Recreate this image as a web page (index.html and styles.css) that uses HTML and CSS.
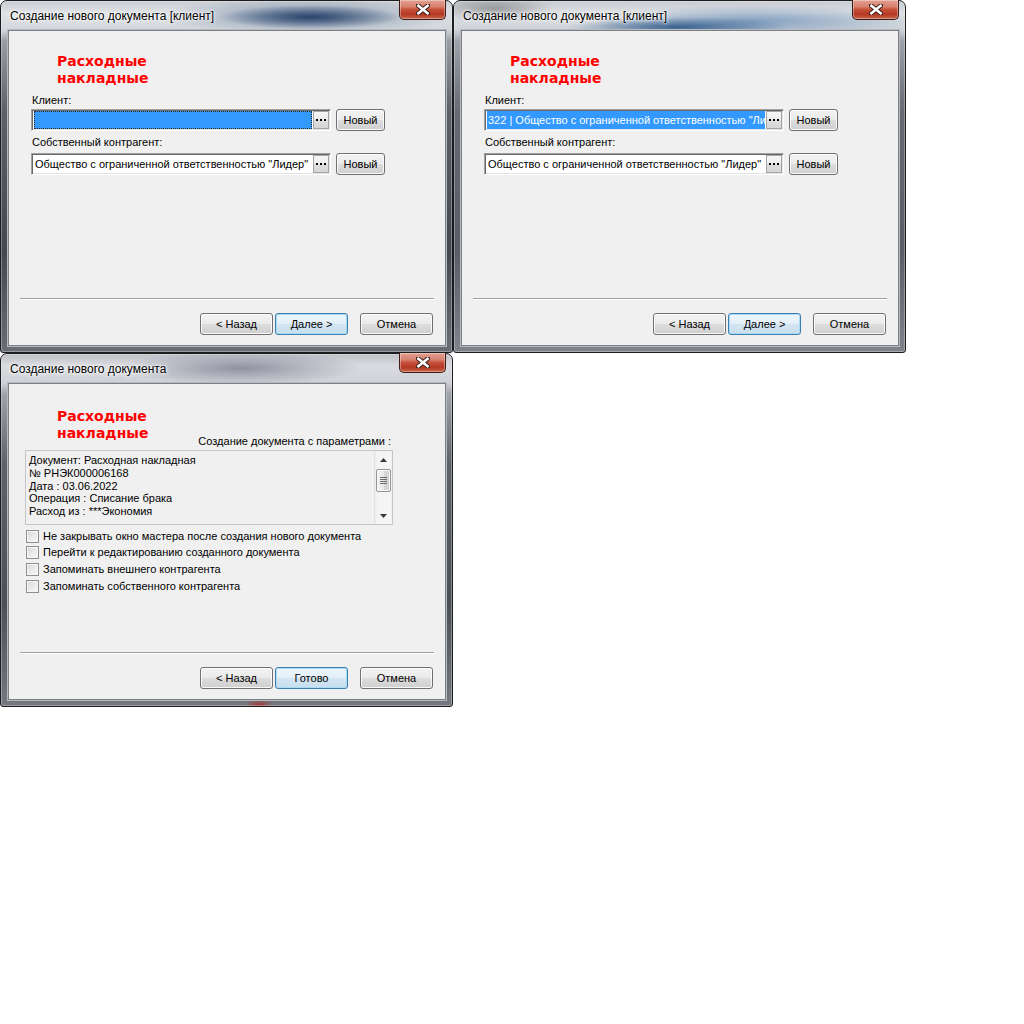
FILE: index.html
```html
<!DOCTYPE html>
<html lang="ru">
<head>
<meta charset="utf-8">
<title>Создание нового документа</title>
<link rel="stylesheet" href="styles.css">
</head>
<body>
<div class="screen">

  <!-- Window 1 -->
  <div class="win win-a">
    <div class="titlebar">
      <span class="title">Создание нового документа [клиент]</span>
      <span class="close"><svg width="14" height="11" viewBox="0 0 14 11"><path d="M2 1.5 L12 9.5 M12 1.5 L2 9.5" stroke="#3b1d17" stroke-width="4.6" stroke-linecap="square"/><path d="M2.4 1.8 L11.6 9.2 M11.6 1.8 L2.4 9.2" stroke="#fff" stroke-width="2.6" stroke-linecap="square"/></svg></span>
    </div>
    <div class="client">
      <div class="heading">Расходные<br>накладные</div>
      <div class="label">Клиент:</div>
      <div class="field-row">
        <div class="combo">
          <div class="combo-text selected focus"></div>
          <span class="ellipsis"><svg width="10" height="3" viewBox="0 0 10 3"><rect x="0" y="0" width="2" height="2" fill="#000"/><rect x="4" y="0" width="2" height="2" fill="#000"/><rect x="8" y="0" width="2" height="2" fill="#000"/></svg></span>
        </div>
        <button class="btn btn-new">Новый</button>
      </div>
      <div class="label label-2">Собственный контрагент:</div>
      <div class="field-row">
        <div class="combo">
          <div class="combo-text">Общество с ограниченной ответственностью "Лидер"</div>
          <span class="ellipsis"><svg width="10" height="3" viewBox="0 0 10 3"><rect x="0" y="0" width="2" height="2" fill="#000"/><rect x="4" y="0" width="2" height="2" fill="#000"/><rect x="8" y="0" width="2" height="2" fill="#000"/></svg></span>
        </div>
        <button class="btn btn-new">Новый</button>
      </div>
      <div class="footer">
        <div class="sep"></div>
        <div class="buttons">
          <button class="btn">&lt; Назад</button>
          <button class="btn btn-default">Далее &gt;</button>
          <button class="btn btn-cancel">Отмена</button>
        </div>
      </div>
    </div>
  </div>

  <!-- Window 2 -->
  <div class="win win-b">
    <div class="titlebar">
      <span class="title">Создание нового документа [клиент]</span>
      <span class="close"><svg width="14" height="11" viewBox="0 0 14 11"><path d="M2 1.5 L12 9.5 M12 1.5 L2 9.5" stroke="#3b1d17" stroke-width="4.6" stroke-linecap="square"/><path d="M2.4 1.8 L11.6 9.2 M11.6 1.8 L2.4 9.2" stroke="#fff" stroke-width="2.6" stroke-linecap="square"/></svg></span>
    </div>
    <div class="client">
      <div class="heading">Расходные<br>накладные</div>
      <div class="label">Клиент:</div>
      <div class="field-row">
        <div class="combo">
          <div class="combo-text selected">322 | Общество с ограниченной ответственностью "Ли</div>
          <span class="ellipsis"><svg width="10" height="3" viewBox="0 0 10 3"><rect x="0" y="0" width="2" height="2" fill="#000"/><rect x="4" y="0" width="2" height="2" fill="#000"/><rect x="8" y="0" width="2" height="2" fill="#000"/></svg></span>
        </div>
        <button class="btn btn-new">Новый</button>
      </div>
      <div class="label label-2">Собственный контрагент:</div>
      <div class="field-row">
        <div class="combo">
          <div class="combo-text">Общество с ограниченной ответственностью "Лидер"</div>
          <span class="ellipsis"><svg width="10" height="3" viewBox="0 0 10 3"><rect x="0" y="0" width="2" height="2" fill="#000"/><rect x="4" y="0" width="2" height="2" fill="#000"/><rect x="8" y="0" width="2" height="2" fill="#000"/></svg></span>
        </div>
        <button class="btn btn-new">Новый</button>
      </div>
      <div class="footer">
        <div class="sep"></div>
        <div class="buttons">
          <button class="btn">&lt; Назад</button>
          <button class="btn btn-default">Далее &gt;</button>
          <button class="btn btn-cancel">Отмена</button>
        </div>
      </div>
    </div>
  </div>

  <!-- Window 3 -->
  <div class="win win-c">
    <div class="titlebar">
      <span class="title">Создание нового документа</span>
      <span class="close"><svg width="14" height="11" viewBox="0 0 14 11"><path d="M2 1.5 L12 9.5 M12 1.5 L2 9.5" stroke="#3b1d17" stroke-width="4.6" stroke-linecap="square"/><path d="M2.4 1.8 L11.6 9.2 M11.6 1.8 L2.4 9.2" stroke="#fff" stroke-width="2.6" stroke-linecap="square"/></svg></span>
    </div>
    <div class="client client-c">
      <div class="head-row">
        <div class="heading heading-c">Расходные<br>накладные</div>
        <div class="params-label">Создание документа с параметрами :</div>
      </div>
      <div class="listbox">
        <div class="list-lines">
          <div>Документ: Расходная накладная</div>
          <div>№ РНЭК000006168</div>
          <div>Дата : 03.06.2022</div>
          <div>Операция : Списание брака</div>
          <div>Расход из : ***Экономия</div>
        </div>
        <div class="vscroll">
          <span class="arrow-up"><svg width="7" height="4" viewBox="0 0 7 4"><path d="M0 4 L3.5 0 L7 4 Z" fill="#3a3a3a"/></svg></span>
          <span class="thumb"><svg width="7" height="7" viewBox="0 0 7 7"><path d="M0 0.5 H7 M0 2.5 H7 M0 4.5 H7 M0 6.5 H7" stroke="#6d6d6d" stroke-width="1"/></svg></span>
          <span class="arrow-down"><svg width="7" height="4" viewBox="0 0 7 4"><path d="M0 0 L7 0 L3.5 4 Z" fill="#3a3a3a"/></svg></span>
        </div>
      </div>
      <div class="checks">
        <label class="check"><span class="box"></span>Не закрывать окно мастера после создания нового документа</label>
        <label class="check"><span class="box"></span>Перейти к редактированию созданного документа</label>
        <label class="check"><span class="box"></span>Запоминать внешнего контрагента</label>
        <label class="check"><span class="box"></span>Запоминать собственного контрагента</label>
      </div>
      <div class="footer">
        <div class="sep"></div>
        <div class="buttons">
          <button class="btn">&lt; Назад</button>
          <button class="btn btn-default">Готово</button>
          <button class="btn btn-cancel">Отмена</button>
        </div>
      </div>
    </div>
  </div>

</div>
</body>
</html>
```
FILE: styles.css
```css
* { box-sizing: border-box; }

html, body {
  margin: 0;
  padding: 0;
  background: #ffffff;
}

body {
  width: 1024px;
  height: 1024px;
  font-family: "Liberation Sans", Arial, sans-serif;
  font-size: 11px;
  color: #000;
}

.screen {
  display: grid;
  grid-template-columns: 453px 453px;
  grid-template-rows: 353px 354px;
}

/* ---------- window frame ---------- */
.win {
  display: flex;
  flex-direction: column;
  border: 1px solid #1b1c1e;
  border-radius: 7px 7px 3px 3px;
  padding: 0 6px 6px 7px;
  box-shadow: inset 0 0 0 1px rgba(255,255,255,0.3);
}

.win-a {
  background:
    radial-gradient(ellipse 90px 12px at 310px 16px, rgba(38,64,104,0.95), rgba(38,64,104,0) 100%),
    radial-gradient(ellipse 150px 18px at 305px 15px, rgba(90,115,150,0.7), rgba(90,115,150,0) 100%),
    linear-gradient(to bottom, #c9cdd2 0, #dfe2e6 12px, #d2d6da 29px, #9a9ea3 40px, #5d6167 110px, #45494f 250px, #6a6e74 100%);
}

.win-b {
  background:
    radial-gradient(ellipse 110px 10px at 225px 26px, rgba(50,92,140,0.95), rgba(50,92,140,0) 100%),
    radial-gradient(ellipse 160px 16px at 300px 20px, rgba(110,145,185,0.8), rgba(110,145,185,0) 100%),
    radial-gradient(ellipse 60px 14px at 40px 8px, rgba(110,110,110,0.6), rgba(110,110,110,0) 100%),
    linear-gradient(to bottom, #c7cbd0 0, #dde0e4 12px, #cdd2d8 29px, #9da3a9 40px, #676b71 110px, #5a5e64 250px, #80848a 100%);
}

.win-c {
  background:
    radial-gradient(ellipse 120px 17px at 240px 14px, rgba(135,137,155,0.9), rgba(135,137,155,0) 100%),
    radial-gradient(ellipse 14px 6px at 258px 351px, rgba(170,40,40,0.8), rgba(170,40,40,0) 100%),
    linear-gradient(to bottom, #bfc1c7 0, #d9dbe0 12px, #cfd1d6 29px, #9fa2a7 40px, #5f6369 110px, #4c5056 250px, #75797f 100%);
}

.titlebar {
  height: 29px;
  display: flex;
  justify-content: space-between;
  align-items: flex-start;
  padding-left: 2px;
}

.title {
  margin-top: 8px;
  font-family: "Liberation Sans", Arial, sans-serif;
  font-size: 12px;
  line-height: 15px;
  color: #000;
  text-shadow: 0 0 6px #fff, 0 0 3px #fff, 0 0 2px rgba(255,255,255,0.9);
}

.close {
  width: 47px;
  height: 20px;
  margin-top: -1px;
  border: 1px solid #3d1a14;
  border-top: none;
  border-radius: 0 0 5px 5px;
  background: linear-gradient(to bottom, #e3a191 0%, #d7806e 35%, #c6513b 50%, #b33823 75%, #c9654a 100%);
  box-shadow: inset 0 0 0 1px rgba(255,255,255,0.35);
  display: flex;
  align-items: center;
  justify-content: center;
}

/* ---------- client area ---------- */
.client {
  flex: 1;
  display: flex;
  flex-direction: column;
  background: #f0f0f0;
  border: 1px solid #7b8087;
  box-shadow: 0 0 0 1px #b6b9bd;
  padding: 22px 0 10px 0;
}

.heading {
  margin-left: 48px;
  font-family: "DejaVu Sans", Verdana, sans-serif;
  font-weight: bold;
  font-size: 14px;
  line-height: 17px;
  color: #ff0000;
}

.label {
  margin: 7px 0 0 23px;
  line-height: 13px;
}

.label-2 { margin-top: 5px; }

.field-row {
  display: flex;
  align-items: center;
  margin: 2px 0 0 22px;
}

.label-2 + .field-row { margin-top: 4px; }

.combo {
  width: 300px;
  height: 22px;
  display: flex;
  align-items: center;
  border: 1px solid;
  border-color: #a0a0a0 #ffffff #ffffff #a0a0a0;
  box-shadow: inset 1px 1px 0 #696969, inset -1px -1px 0 #e3e3e3;
  background: #ffffff;
  padding: 2px 1px 2px 2px;
}

.combo-text {
  flex: 1;
  height: 18px;
  line-height: 18px;
  padding-left: 1px;
  white-space: nowrap;
  overflow: hidden;
}

.selected {
  background: #3399ff;
  color: #ffffff;
}

.focus {
  outline: 1px dotted #2a2a2a;
  outline-offset: -1px;
}

.ellipsis {
  width: 16px;
  height: 18px;
  margin-left: 1px;
  display: flex;
  align-items: center;
  justify-content: center;
  border: 1px solid #a5a5a5;
  background: linear-gradient(to bottom, #f6f6f6 0%, #ececec 50%, #dfdfdf 51%, #d6d6d6 100%);
}

/* ---------- buttons ---------- */
.btn {
  height: 22px;
  width: 73px;
  padding: 0;
  font-family: "Liberation Sans", Arial, sans-serif;
  font-size: 11px;
  color: #000;
  border: 1px solid #707070;
  border-radius: 3px;
  background: linear-gradient(to bottom, #f2f2f2 0%, #ebebeb 48%, #dddddd 50%, #cfcfcf 100%);
  box-shadow: inset 0 0 0 1px rgba(255,255,255,0.85);
}

.btn-new {
  width: 49px;
  margin-left: 5px;
}

.btn-default {
  border-color: #3c7fb1;
  background: linear-gradient(to bottom, #eef6fc 0%, #e3eff8 48%, #d3e5f2 50%, #c9dfee 100%);
  box-shadow: inset 0 0 0 1px #a9dbf6;
}

.footer {
  margin-top: auto;
}

.sep {
  height: 2px;
  margin: 0 11px;
  border-top: 1px solid #a0a0a0;
  border-bottom: 1px solid #ffffff;
}

.buttons {
  display: flex;
  justify-content: flex-end;
  gap: 2px;
  margin-top: 13px;
  padding-right: 12px;
}

.btn-cancel { margin-left: 10px; }

/* ---------- third window ---------- */
.client-c { padding-top: 24px; padding-bottom: 10px; }

.head-row {
  display: flex;
  justify-content: space-between;
  align-items: flex-end;
  padding-right: 54px;
}

.heading-c { margin-bottom: 6px; }

.params-label {
  line-height: 13px;
}

.listbox {
  display: flex;
  height: 75px;
  margin: 2px 52px 0 16px;
  border: 1px solid #c5c5c5;
  background: #f0f0f0;
}

.list-lines {
  flex: 1;
  padding: 3px 0 0 3px;
  line-height: 12.75px;
}

.vscroll {
  width: 17px;
  margin: 0 1px 0 0;
  display: flex;
  flex-direction: column;
  align-items: center;
  background: linear-gradient(to right, #e9e9e9 0, #f4f4f4 2px, #f6f6f6 100%);
  border-left: 1px solid #e2e2e2;
}

.arrow-up, .arrow-down {
  height: 17px;
  width: 15px;
  display: flex;
  align-items: center;
  justify-content: center;
}

.thumb {
  width: 15px;
  height: 23px;
  margin-top: 1px;
  border: 1px solid #959595;
  border-radius: 2px;
  background: linear-gradient(to right, #f3f3f3 0%, #e8e8e8 50%, #d8d8d8 51%, #cfcfcf 100%);
  box-shadow: inset 0 0 0 1px #fafafa;
  display: flex;
  align-items: center;
  justify-content: center;
}

.arrow-down { margin-top: auto; }

.checks {
  margin-top: 5px;
  padding-left: 17px;
  display: flex;
  flex-direction: column;
}

.check {
  height: 16.67px;
  display: flex;
  align-items: center;
  gap: 4px;
  line-height: 13px;
}

.check:first-child { margin-top: -2px; }

.box {
  width: 13px;
  height: 13px;
  border: 1px solid #8e8f8f;
  background: linear-gradient(135deg, #d7d8d9 0%, #ededee 60%, #f7f7f7 100%);
  box-shadow: inset 0 0 0 1px #f6f6f6;
}
```
